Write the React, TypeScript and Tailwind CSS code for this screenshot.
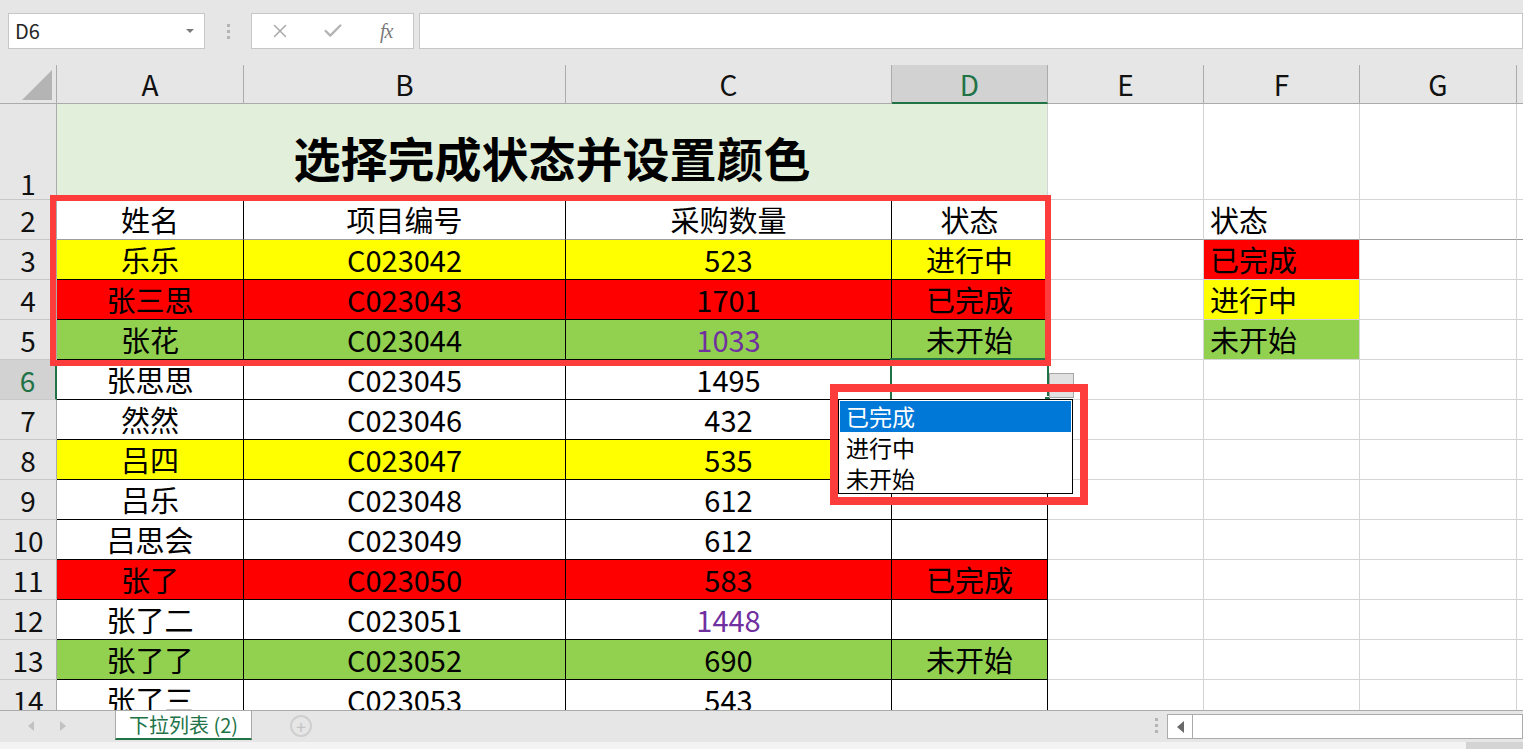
import { X, Check } from "lucide-react";

const YELLOW = "bg-[#ffff00]";
const RED = "bg-[#ff0000]";
const GREEN = "bg-[#92d050]";

type DataRow = {
  n: number;
  name: string;
  code: string;
  qty: string;
  status?: string;
  fill?: string;
  purple?: boolean;
  side?: { text: string; fill: string };
};

const rows: DataRow[] = [
  { n: 3, name: "乐乐", code: "C023042", qty: "523", status: "进行中", fill: YELLOW, side: { text: "已完成", fill: RED } },
  { n: 4, name: "张三思", code: "C023043", qty: "1701", status: "已完成", fill: RED, side: { text: "进行中", fill: YELLOW } },
  { n: 5, name: "张花", code: "C023044", qty: "1033", status: "未开始", fill: GREEN, purple: true, side: { text: "未开始", fill: GREEN } },
  { n: 6, name: "张思思", code: "C023045", qty: "1495" },
  { n: 7, name: "然然", code: "C023046", qty: "432" },
  { n: 8, name: "吕四", code: "C023047", qty: "535", fill: YELLOW },
  { n: 9, name: "吕乐", code: "C023048", qty: "612" },
  { n: 10, name: "吕思会", code: "C023049", qty: "612" },
  { n: 11, name: "张了", code: "C023050", qty: "583", status: "已完成", fill: RED },
  { n: 12, name: "张了二", code: "C023051", qty: "1448", purple: true },
  { n: 13, name: "张了了", code: "C023052", qty: "690", status: "未开始", fill: GREEN },
  { n: 14, name: "张了三", code: "C023053", qty: "543" },
];

const COLS = ["A", "B", "C", "D", "E", "F", "G"];

function Toolbar() {
  return (
    <div className="h-[65px] bg-[#e6e6e6] flex items-start pt-[13px] pl-[8px]">
      <div className="w-[197px] h-[36px] bg-white border border-[#c6c6c6] flex items-center justify-between pl-[6px] pr-[10px]">
        <span className="text-[20px] text-[#262626]">D6</span>
        <span className="w-0 h-0 border-l-[4px] border-r-[4px] border-t-[4px] border-l-transparent border-r-transparent border-t-[#7a7a7a]" />
      </div>
      <div className="w-[46px] h-[36px] flex flex-col items-center justify-center gap-[3px]">
        <span className="w-[3px] h-[3px] bg-[#b4b4b4]" />
        <span className="w-[3px] h-[3px] bg-[#b4b4b4]" />
        <span className="w-[3px] h-[3px] bg-[#b4b4b4]" />
      </div>
      <div className="w-[163px] h-[36px] bg-white border border-[#c6c6c6] flex items-center">
        <div className="w-[54px] flex justify-center pl-[2px]">
          <X size={22} strokeWidth={1.6} className="text-[#a8a8a8]" />
        </div>
        <div className="w-[54px] flex justify-center">
          <Check size={22} strokeWidth={2.6} className="text-[#b4b4b4]" />
        </div>
        <div className="w-[54px] flex justify-center">
          <span className="font-['Liberation_Serif',serif] italic text-[20px] text-[#7a7a7a] tracking-[-1px]">fx</span>
        </div>
      </div>
      <div className="flex-1 h-[36px] ml-[5px] bg-white border border-[#c6c6c6]" />
    </div>
  );
}

function Grid() {
  const cells: React.ReactNode[] = [];

  // header row
  cells.push(
    <div key="corner" className="bg-[#e6e6e6] border-r border-b border-[#ababab] flex items-end justify-end pr-[4px] pb-[3px]">
      <div className="w-0 h-0 border-l-[30px] border-l-transparent border-b-[30px] border-b-[#b4b4b4]" />
    </div>
  );
  COLS.forEach((c) => {
    const active = c === "D";
    cells.push(
      <div
        key={`h${c}`}
        className={
          active
            ? "bg-[#d2d2d2] border-r border-r-[#ababab] border-b-2 border-b-[#217346] text-[#217346] flex items-center justify-center text-[28px]"
            : "bg-[#e6e6e6] border-r border-b border-[#ababab] text-[#111] flex items-center justify-center text-[28px]"
        }
      >
        {c}
      </div>
    );
  });
  cells.push(<div key="hX" className="bg-[#e6e6e6] border-b border-[#ababab]" />);

  // row 1: title
  cells.push(
    <div key="r1" className="bg-[#e6e6e6] border-r border-b border-r-[#ababab] border-b-[#c8c8c8] flex items-end justify-center pb-[2px] text-[28px] text-[#111]">
      1
    </div>
  );
  cells.push(
    <div key="title" className="col-span-4 bg-[#e2efda] border-r border-b border-r-[#d4d4d4] border-b-black flex items-center justify-center pt-[10px]">
      <span className="text-[47px] font-bold text-black leading-none">选择完成状态并设置颜色</span>
    </div>
  );
  for (let i = 0; i < 3; i++) cells.push(<div key={`r1g${i}`} className="border-r border-b border-[#d4d4d4]" />);
  cells.push(<div key="r1x" className="border-b border-[#d4d4d4]" />);

  // row 2: headers
  cells.push(
    <div key="r2" className="bg-[#e6e6e6] border-r border-b border-r-[#ababab] border-b-[#c8c8c8] flex items-center justify-center text-[28px] text-[#111]">
      2
    </div>
  );
  ["姓名", "项目编号", "采购数量", "状态"].forEach((t) =>
    cells.push(
      <div key={`r2${t}`} className="bg-white border-r border-r-black border-b border-b-[#9e9e9e] flex items-center justify-center">
        {t}
      </div>
    )
  );
  cells.push(<div key="r2E" className="border-r border-r-[#d4d4d4] border-b border-b-[#9e9e9e]" />);
  cells.push(
    <div key="r2F" className="border-r border-r-[#d4d4d4] border-b border-b-[#9e9e9e] flex items-center pl-[6px]">
      状态
    </div>
  );
  cells.push(<div key="r2G" className="border-r border-r-[#d4d4d4] border-b border-b-[#9e9e9e]" />);
  cells.push(<div key="r2x" className="border-b border-b-[#9e9e9e]" />);

  rows.forEach((r) => {
    const active = r.n === 6;
    cells.push(
      <div
        key={`rh${r.n}`}
        className={
          active
            ? "bg-[#d2d2d2] border-r-2 border-r-[#217346] border-b border-b-[#c8c8c8] text-[#217346] flex items-center justify-center text-[28px]"
            : "bg-[#e6e6e6] border-r border-r-[#ababab] border-b border-b-[#c8c8c8] text-[#111] flex items-center justify-center text-[28px]"
        }
      >
        {r.n}
      </div>
    );
    const fill = r.fill ?? "bg-white";
    const base = `${fill} border-r border-b border-black flex items-center justify-center whitespace-nowrap`;
    cells.push(<div key={`a${r.n}`} className={base}>{r.name}</div>);
    cells.push(<div key={`b${r.n}`} className={base}>{r.code}</div>);
    cells.push(
      <div key={`c${r.n}`} className={base}>
        <span className={r.purple ? "text-[#7030a0]" : ""}>{r.qty}</span>
      </div>
    );
    const dFill = r.status ? fill : "bg-white";
    cells.push(
      <div key={`d${r.n}`} className={`${dFill} border-r border-b border-black flex items-center justify-center`}>
        {r.status}
      </div>
    );
    cells.push(<div key={`e${r.n}`} className="border-r border-b border-[#d4d4d4]" />);
    cells.push(
      r.side ? (
        <div key={`f${r.n}`} className={`${r.side.fill} border-r border-r-[#d4d4d4] border-b border-b-[#d4d4d4] flex items-center pl-[6px]`}>
          {r.side.text}
        </div>
      ) : (
        <div key={`f${r.n}`} className="border-r border-b border-[#d4d4d4]" />
      )
    );
    cells.push(<div key={`g${r.n}`} className="border-r border-b border-[#d4d4d4]" />);
    cells.push(<div key={`x${r.n}`} className="border-b border-[#d4d4d4]" />);
  });

  return (
    <div className="h-[645px] overflow-hidden">
      <div className="grid grid-cols-[57px_187px_322px_326px_156px_156px_156px_157px_1fr] grid-rows-[39px_96px_repeat(13,40px)] text-[29px] text-black leading-none">
        {cells}
      </div>
    </div>
  );
}

function TabBar() {
  return (
    <div className="h-[39px] flex flex-col">
      <div className="h-[32px] bg-[#e6e6e6] border-t border-[#ababab] flex items-start">
        <div className="w-[115px] h-[29px] flex items-center pl-[28px] gap-[26px]">
          <span className="w-0 h-0 border-t-[5px] border-b-[5px] border-r-[6px] border-t-transparent border-b-transparent border-r-[#c2c2c2]" />
          <span className="w-0 h-0 border-t-[5px] border-b-[5px] border-l-[6px] border-t-transparent border-b-transparent border-l-[#c2c2c2]" />
        </div>
        <div className="w-[137px] h-[29px] bg-white border-x border-[#ababab] border-b-2 border-b-[#217346] flex items-center justify-center text-[20px] text-[#217346]">
          下拉列表 (2)
        </div>
        <div className="w-[98px] h-[29px] flex items-center justify-center">
          <div className="w-[22px] h-[22px] rounded-full border-2 border-[#cfcfcf] flex items-center justify-center text-[#c4c4c4] text-[18px] leading-none">
            +
          </div>
        </div>
        <div className="flex-1" />
        <div className="w-[20px] h-[29px] flex flex-col items-center justify-center gap-[3px] mr-[1px]">
          <span className="w-[3px] h-[3px] bg-[#b4b4b4]" />
          <span className="w-[3px] h-[3px] bg-[#b4b4b4]" />
          <span className="w-[3px] h-[3px] bg-[#b4b4b4]" />
        </div>
        <div className="w-[356px] h-[25px] mt-[3px] bg-white border border-[#ababab] flex">
          <div className="w-[25px] border-r border-[#ababab] flex items-center justify-center">
            <span className="w-0 h-0 border-t-[6px] border-b-[6px] border-r-[7px] border-t-transparent border-b-transparent border-r-[#6a6a6a]" />
          </div>
        </div>
      </div>
      <div className="flex-1 bg-[#f3f3f3] flex justify-end">
        <div className="w-[57px] bg-[#d4d4d4]" />
      </div>
    </div>
  );
}

export default function App() {
  return (
    <div className="relative w-[1523px] h-[749px] overflow-hidden bg-white font-['Noto_Sans_CJK_SC','Noto_Sans',sans-serif]">
      <Toolbar />
      <Grid />
      <TabBar />

      {/* selection on D6 */}
      <div className="absolute left-[890px] top-[358px] w-[159px] h-[43px] border-2 border-[#217346]" />
      <div className="absolute left-[1044px] top-[396px] w-[7px] h-[7px] bg-[#217346] border border-white" />
      {/* validation arrow button */}
      <div className="absolute left-[1049px] top-[373px] w-[25px] h-[25px] bg-[#e1e1e1] border border-[#a6a6a6] flex items-center justify-center">
        <span className="w-[8px] h-[3px] bg-[#555]" />
      </div>

      {/* dropdown list */}
      <div className="absolute left-[838px] top-[399px] w-[235px] h-[95px] bg-white border border-black p-[1px] flex flex-col text-[23px] leading-[31px] text-black">
        <div className="bg-[#0078d7] text-white pl-[6px] h-[31px]">已完成</div>
        <div className="pl-[6px] h-[31px]">进行中</div>
        <div className="pl-[6px] h-[31px]">未开始</div>
      </div>

      {/* annotation boxes */}
      <div className="absolute left-[50px] top-[195px] w-[1001px] h-[171px] border-[6px] border-[#fd3c3c]" />
      <div className="absolute left-[830px] top-[384px] w-[258px] h-[121px] border-[8px] border-[#fd3c3c]" />
    </div>
  );
}
